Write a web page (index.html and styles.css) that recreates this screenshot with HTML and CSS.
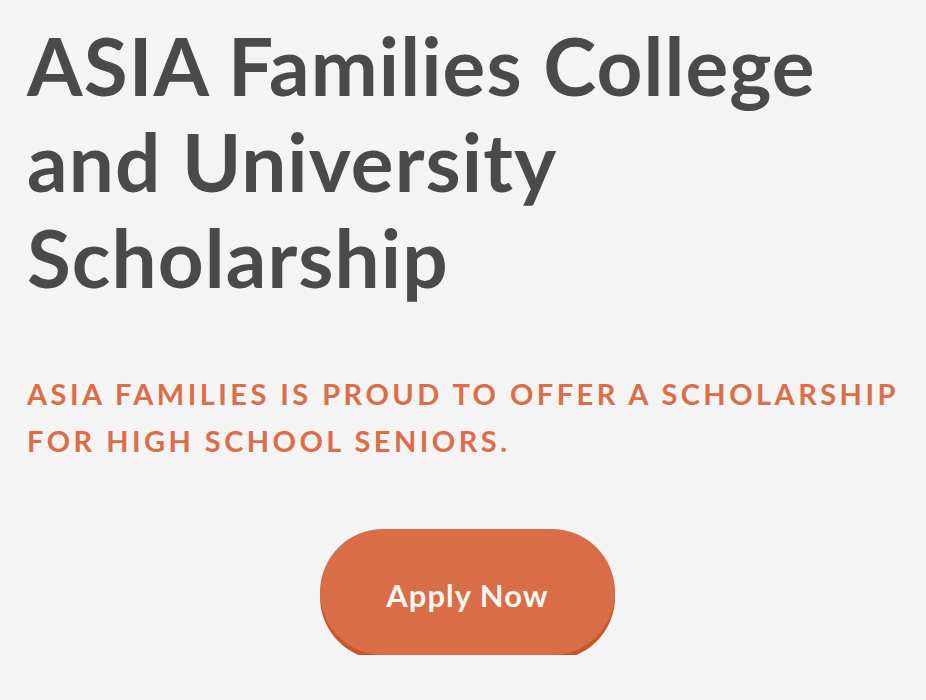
FILE: index.html
```html
<!DOCTYPE html>
<html>
<head>
<meta charset="utf-8">
<link rel="stylesheet" href="styles.css">
</head>
<body>
<main class="hero">
  <h1 class="title">ASIA Families College and University Scholarship</h1>
  <p class="lead">ASIA Families is proud to offer a scholarship for high school seniors.</p>
  <div class="cta-row">
    <a class="cta" href="#">Apply Now</a>
  </div>
</main>
</body>
</html>
```
FILE: styles.css
```css
html, body {
  margin: 0;
  padding: 0;
  background: #f4f4f4;
}
.hero {
  padding: 17px 20px 0 27px;
  font-family: Lato, "Noto Sans", sans-serif;
}
.title {
  margin: 0;
  width: 880px;
  font-size: 80px;
  line-height: 96px;
  font-weight: 700;
  color: #4a4a4a;
  letter-spacing: 1.1px;
}
.lead {
  margin: 65px 0 0 0;
  font-size: 29px;
  line-height: 47px;
  font-weight: 700;
  color: #dc6d48;
  text-transform: uppercase;
  letter-spacing: 3.45px;
}
.cta-row {
  display: flex;
  justify-content: center;
  padding: 65px 0 0 2px;
}
.cta {
  display: flex;
  align-items: center;
  justify-content: center;
  box-sizing: border-box;
  width: 295px;
  height: 126px;
  padding-top: 5px;
  border-radius: 63px;
  background: #d96d47;
  box-shadow: 0 5px 0 #c9552f;
  color: #f3f6f1;
  text-decoration: none;
  font-size: 31px;
  font-weight: 700;
  letter-spacing: 1px;
}
```
